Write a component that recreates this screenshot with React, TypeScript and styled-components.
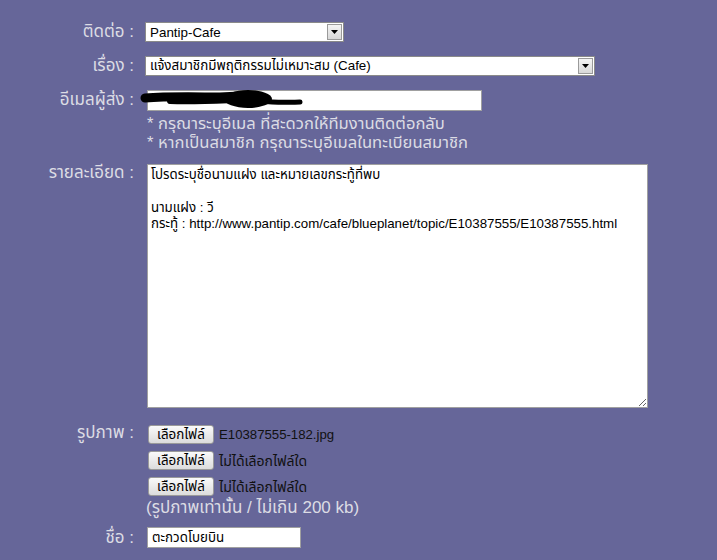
import React from "react";
import styled, { createGlobalStyle } from "styled-components";

const Global = createGlobalStyle`
  html, body { margin: 0; padding: 0; background: #666699; }
  body { font-family: Tahoma, "Liberation Sans", "Noto Sans Thai", "Noto Sans", sans-serif; }
`;

const Page = styled.div`
  width: 717px;
  height: 560px;
  overflow: hidden;
  padding-top: 22px;
  box-sizing: border-box;
  background: #666699;
`;

const Row = styled.div<{ $top?: number; $align?: string }>`
  display: flex;
  align-items: ${(p) => p.$align || "center"};
  margin-top: ${(p) => p.$top ?? 0}px;
  position: relative;
`;

const Label = styled.div<{ $dy?: number }>`
  width: 134px;
  flex: none;
  text-align: right;
  color: #dcdce4;
  font-size: 17px;
  line-height: 18px;
  margin-right: 11px;
  margin-top: ${(p) => p.$dy ?? 0}px;
  white-space: nowrap;
`;

const Field = styled.div`
  display: flex;
  flex-direction: column;
`;

const SelectBox = styled.div<{ $w: number }>`
  width: ${(p) => p.$w}px;
  height: 20px;
  box-sizing: border-box;
  border: 1px solid #8a8a8a;
  background: #fff;
  display: flex;
  align-items: center;
  font-size: 13.4px;
  color: #000;
`;

const SelectText = styled.span`
  flex: 1;
  padding-left: 4px;
  white-space: nowrap;
  overflow: hidden;
`;

const ArrowBtn = styled.span`
  width: 15px;
  height: 16px;
  margin-right: 1px;
  box-sizing: border-box;
  border: 1px solid #9a9a9a;
  background: linear-gradient(#f4f4f4, #d8d8d8);
  display: flex;
  align-items: center;
  justify-content: center;
`;

const Input = styled.div<{ $w: number }>`
  width: ${(p) => p.$w}px;
  height: 21px;
  margin-left: 2px;
  box-sizing: border-box;
  border: 1px solid #a0a0a0;
  background: #fff;
  font-size: 13.4px;
  line-height: 19px;
  padding-left: 4px;
  color: #000;
  position: relative;
`;

const Help = styled.div`
  color: #dcdce4;
  font-size: 16.6px;
  line-height: 19px;
  margin-left: 2px;
  margin-top: 3px;
  white-space: nowrap;
`;

const TextArea = styled.textarea`
  width: 501px;
  height: 244px;
  margin: 0 0 0 2px;
  box-sizing: border-box;
  border: 1px solid #a0a0a0;
  background: #fff;
  font-family: Tahoma, "Liberation Sans", "Noto Sans Thai", sans-serif;
  font-size: 13.3px;
  line-height: 16.4px;
  padding: 2px 3px;
  color: #000;
  resize: both;
  outline: none;
`;

const FileRow = styled.div`
  display: flex;
  align-items: center;
  height: 20px;
  margin-left: 3px;
  & + & { margin-top: 6px; }
`;

const FileBtn = styled.span`
  height: 19px;
  width: 66px;
  box-sizing: border-box;
  border: 1px solid #9a9a9a;
  border-radius: 3px;
  background: linear-gradient(#fafafa, #dcdcdc);
  font-size: 13.4px;
  line-height: 17px;
  text-align: center;
  color: #000;
`;

const FileName = styled.span<{ $wide?: boolean }>`
  margin-left: 5px;
  font-size: ${(p) => (p.$wide ? 14 : 13.2)}px;
  margin-top: ${(p) => (p.$wide ? 3 : 0)}px;
  color: #111;
  white-space: nowrap;
`;

const Note = styled.div`
  color: #dcdce4;
  font-size: 17px;
  line-height: 20px;
  margin-left: 1px;
  margin-top: 2px;
  white-space: nowrap;
`;

const Scribble = styled.svg`
  position: absolute;
  left: -8px;
  top: -4px;
  pointer-events: none;
`;

const Arrow = () => (
  <svg width="7" height="4" viewBox="0 0 7 4">
    <polygon points="0,0 7,0 3.5,4" fill="#000" />
  </svg>
);

export default function App() {
  return (
    <Page>
      <Global />
      <Row>
        <Label>ติดต่อ :</Label>
        <SelectBox $w={199}>
          <SelectText>Pantip-Cafe</SelectText>
          <ArrowBtn><Arrow /></ArrowBtn>
        </SelectBox>
      </Row>
      <Row $top={14}>
        <Label>เรื่อง :</Label>
        <SelectBox $w={450}>
          <SelectText>แจ้งสมาชิกมีพฤติกรรมไม่เหมาะสม (Cafe)</SelectText>
          <ArrowBtn><Arrow /></ArrowBtn>
        </SelectBox>
      </Row>
      <Row $top={14} $align="flex-start">
        <Label $dy={1}>อีเมลผู้ส่ง :</Label>
        <Field>
          <Input $w={335}>
            <Scribble width="170" height="28" viewBox="0 0 170 28">
              <path
                d="M5 11 C 30 9, 60 10, 80 10 L 100 9"
                stroke="#000"
                strokeWidth="9"
                strokeLinecap="round"
                fill="none"
              />
              <path
                d="M30 14 C 50 15, 70 14, 95 13"
                stroke="#000"
                strokeWidth="6"
                strokeLinecap="round"
                fill="none"
              />
              <ellipse cx="108" cy="12" rx="24" ry="9" fill="#000" />
              <path
                d="M120 14 C 135 15, 145 16, 160 15"
                stroke="#000"
                strokeWidth="5"
                strokeLinecap="round"
                fill="none"
              />
            </Scribble>
          </Input>
          <Help>
            * กรุณาระบุอีเมล ที่สะดวกให้ทีมงานติดต่อกลับ
            <br />* หากเป็นสมาชิก กรุณาระบุอีเมลในทะเบียนสมาชิก
          </Help>
        </Field>
      </Row>
      <Row $top={12} $align="flex-start">
        <Label $dy={0}>รายละเอียด :</Label>
        <TextArea
          readOnly
          defaultValue={
            "โปรดระบุชื่อนามแฝง และหมายเลขกระทู้ที่พบ\n\nนามแฝง : วี\nกระทู้ : http://www.pantip.com/cafe/blueplanet/topic/E10387555/E10387555.html"
          }
        />
      </Row>
      <Row $top={16} $align="flex-start">
        <Label $dy={0}>รูปภาพ :</Label>
        <Field>
          <FileRow>
            <FileBtn>เลือกไฟล์</FileBtn>
            <FileName>E10387555-182.jpg</FileName>
          </FileRow>
          <FileRow>
            <FileBtn>เลือกไฟล์</FileBtn>
            <FileName $wide>ไม่ได้เลือกไฟล์ใด</FileName>
          </FileRow>
          <FileRow>
            <FileBtn>เลือกไฟล์</FileBtn>
            <FileName $wide>ไม่ได้เลือกไฟล์ใด</FileName>
          </FileRow>
          <Note>(รูปภาพเท่านั้น / ไม่เกิน 200 kb)</Note>
        </Field>
      </Row>
      <Row $top={9}>
        <Label>ชื่อ :</Label>
        <Input $w={154}>ตะกวดโบยบิน</Input>
      </Row>
    </Page>
  );
}
